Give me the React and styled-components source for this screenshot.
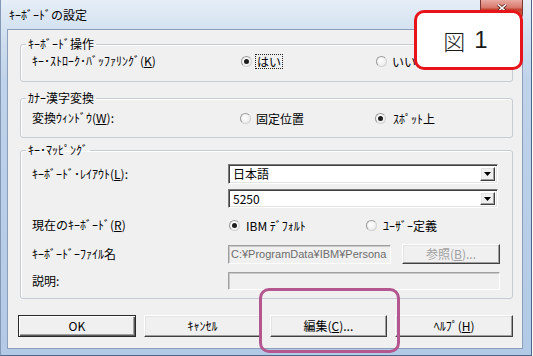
import React from 'react'
import styled, { createGlobalStyle, css } from 'styled-components'

const GlobalStyle = createGlobalStyle`
  html, body {
    margin: 0;
    padding: 0;
    background: #fff;
  }
  body {
    width: 533px;
    height: 356px;
    overflow: hidden;
    font-family: 'Noto Sans CJK JP', 'Liberation Sans', sans-serif;
    color: #000;
  }
`

const sunken = css`
  box-sizing: border-box;
  border: 1px solid;
  border-color: #7a7a7a #fff #fff #7a7a7a;
  box-shadow: inset 1px 1px 0 #404040, inset -1px -1px 0 #e3e3e3;
`

const raised = css`
  box-sizing: border-box;
  border: 1px solid;
  border-color: #fff #404040 #404040 #fff;
  box-shadow: inset -1px -1px 0 #a0a0a0, inset 1px 1px 0 #e3e3e3;
  background: #f0f0f0;
`

const Frame = styled.div`
  position: relative;
  box-sizing: border-box;
  width: 532px;
  height: 356px;
  display: flex;
  flex-direction: column;
  border-left: 1px solid #8399b5;
  border-right: 1px solid #4f6686;
  border-bottom: 1px solid #4f6686;
  background: linear-gradient(180deg, #e6eef7 0px, #d4e2f1 28px, #bfd3ea 80px, #b2cae6 100%);
`

const TitleBar = styled.div`
  height: 29px;
  display: flex;
  align-items: flex-start;
  justify-content: space-between;
`

const Title = styled.div`
  padding: 9px 0 0 8px;
  font-size: 12px;
  line-height: 12px;
`

const CloseButton = styled.div`
  box-sizing: border-box;
  width: 43px;
  height: 18px;
  margin-right: 8px;
  display: flex;
  justify-content: center;
  padding-top: 4px;
  border: 1px solid #7a3630;
  border-top: none;
  border-radius: 0 0 4px 4px;
  background: linear-gradient(180deg, #e9aaa2 0%, #d7776b 45%, #c2432f 55%, #d0634f 100%);
`

const Client = styled.div`
  box-sizing: border-box;
  height: 320px;
  margin: 0 8px 0 6px;
  padding: 0 9px 0 12px;
  border: 1px solid #8b9fba;
  background: #f0f0f0;
  display: flex;
  flex-direction: column;
`

const Group = styled.fieldset`
  margin: ${p => p.$mt}px 0 0;
  padding: 0;
  min-width: 0;
  border: 1px solid #c6ccd2;
  border-radius: 3px;
  box-shadow: inset 1px 1px 0 #fff;
`

const Legend = styled.legend`
  margin-left: 5px;
  padding: 0 2px;
  font-size: 12px;
  line-height: 12px;
`

const GroupBody = styled.div`
  display: flex;
  flex-direction: column;
  padding: ${p => p.$pt}px 12px ${p => p.$pb}px 11px;
`

const Row = styled.div`
  display: grid;
  grid-template-columns: ${p => p.$label}px 1fr;
  align-items: center;
  height: ${p => p.$h}px;
  margin-top: ${p => p.$mt || 0}px;
`

const Label = styled.span`
  font-size: 12px;
  line-height: 12px;
  white-space: nowrap;
`

const Key = styled.span`
  text-decoration: underline;
  text-underline-offset: 1px;
`

const Radios = styled.div`
  display: grid;
  grid-template-columns: ${p => p.$step}px auto;
  padding-left: ${p => p.$indent || 0}px;
`

const RadioItem = styled.div`
  display: flex;
  align-items: center;
  gap: ${p => p.$gap}px;
  font-size: 12px;
  line-height: 12px;
  white-space: nowrap;
`

const RadioDot = styled.span`
  box-sizing: border-box;
  width: 11px;
  height: 11px;
  border-radius: 50%;
  border: 1px solid #9a9a9a;
  border-right-color: #d2d2d2;
  border-bottom-color: #d2d2d2;
  background: radial-gradient(circle at 40% 40%, #fff 0%, #e6e6e6 100%);
  display: flex;
  align-items: center;
  justify-content: center;
  &::after {
    content: '';
    width: 5px;
    height: 5px;
    border-radius: 50%;
    background: ${p => (p.$checked ? '#1c1c1c' : 'transparent')};
  }
`

const RadioText = styled.span`
  padding: 1px 1px 0;
  outline: ${p => (p.$focus ? '1px dotted #222' : 'none')};
`

const Radio = ({ checked, focus, gap = 4, children }) => (
  <RadioItem $gap={gap}>
    <RadioDot $checked={checked} />
    <RadioText $focus={focus}>{children}</RadioText>
  </RadioItem>
)

const Select = styled.div`
  ${sunken};
  width: 270px;
  height: ${p => p.$h}px;
  background: #fff;
  display: flex;
  align-items: center;
  justify-content: space-between;
  padding: 2px 2px 2px 4px;
  font-size: 12px;
  line-height: 12px;
`

const ArrowButton = styled.span`
  ${raised};
  width: 15px;
  height: 100%;
  display: flex;
  align-items: center;
  justify-content: center;
`

const Field = styled.div`
  box-sizing: border-box;
  border: 1px solid;
  border-color: #a0a0a0 #fff #fff #a0a0a0;
  box-shadow: inset 1px 1px 0 #c9c9c9;
  background: #f0f0f0;
  height: ${p => p.$h}px;
  width: ${p => p.$w || 'auto'};
  padding: 0 2px;
  display: flex;
  align-items: center;
  overflow: hidden;
  white-space: nowrap;
  font-family: 'Liberation Sans', 'Noto Sans CJK JP', sans-serif;
  font-size: 11px;
  line-height: 12px;
  color: #6d6d6d;
`

const FileRow = styled.div`
  display: grid;
  grid-template-columns: 163px 98px;
  column-gap: 11px;
  align-items: center;
`

const Button = styled.button`
  ${raised};
  height: ${p => p.$h || 22}px;
  padding: 0;
  font-family: inherit;
  font-size: 12px;
  line-height: 12px;
  color: ${p => (p.disabled ? '#a0a0a0' : '#000')};
  ${p =>
    p.$default &&
    css`
      border-color: #2a2a2a;
      box-shadow: inset 1px 1px 0 #fff, inset -1px -1px 0 #5a5a5a, inset -2px -2px 0 #a0a0a0;
    `}
`

const ButtonRow = styled.div`
  display: grid;
  grid-template-columns: repeat(4, 1fr);
  column-gap: 8px;
  margin: 16px 0 0 -2px;
`

const Callout = styled.div`
  position: absolute;
  left: 413px;
  top: 10px;
  box-sizing: border-box;
  width: 109px;
  height: 60px;
  border: 3px solid #e8141b;
  border-radius: 10px;
  background: #fff;
  display: flex;
  align-items: center;
  justify-content: center;
  gap: 9px;
  padding-right: 6px;
  font-size: 22px;
  line-height: 22px;
  color: #1a1a1a;
`

const CalloutMark = styled.span`
  font-family: 'Noto Sans CJK JP', sans-serif;
  font-weight: 300;
`

const CalloutNum = styled.span`
  font-family: 'Liberation Sans', sans-serif;
  font-size: 24px;
`

const Highlight = styled.div`
  position: absolute;
  left: 258px;
  top: 288px;
  box-sizing: border-box;
  width: 141px;
  height: 65px;
  border: 3px solid #b4578f;
  border-radius: 10px;
`

const Arrow = () => (
  <svg width="7" height="4" viewBox="0 0 7 4">
    <path d="M0 0h7L3.5 4z" fill="#000" />
  </svg>
)

export default function App() {
  return (
    <>
      <GlobalStyle />
      <Frame>
        <TitleBar>
          <Title>ｷｰﾎﾞｰﾄﾞの設定</Title>
          <CloseButton>
            <svg width="10" height="8" viewBox="0 0 10 8">
              <path d="M1 0.5L9 7.5M9 0.5L1 7.5" stroke="#5a1f1a" strokeWidth="3" />
              <path d="M1 0.5L9 7.5M9 0.5L1 7.5" stroke="#fff" strokeWidth="1.6" />
            </svg>
          </CloseButton>
        </TitleBar>
        <Client>
          <Group $mt={8}>
            <Legend>ｷｰﾎﾞｰﾄﾞ操作</Legend>
            <GroupBody $pt={3} $pb={12}>
              <Row $label={209} $h={16}>
                <Label>
                  ｷｰ･ｽﾄﾛｰｸ･ﾊﾞｯﾌｧﾘﾝｸﾞ(<Key>K</Key>)
                </Label>
                <Radios $step={135}>
                  <Radio checked focus>はい</Radio>
                  <Radio>いいえ</Radio>
                </Radios>
              </Row>
            </GroupBody>
          </Group>

          <Group $mt={10}>
            <Legend>ｶﾅｰ漢字変換</Legend>
            <GroupBody $pt={6} $pb={11}>
              <Row $label={208} $h={16}>
                <Label>
                  変換ｳｨﾝﾄﾞｳ(<Key>W</Key>):
                </Label>
                <Radios $step={135}>
                  <Radio>固定位置</Radio>
                  <Radio checked gap={6}>ｽﾎﾟｯﾄ上</Radio>
                </Radios>
              </Row>
            </GroupBody>
          </Group>

          <Group $mt={6}>
            <Legend>ｷｰ･ﾏｯﾋﾟﾝｸﾞ</Legend>
            <GroupBody $pt={0} $pb={8}>
              <Row $label={196} $h={20} $mt={8}>
                <Label>
                  ｷｰﾎﾞｰﾄﾞ･ﾚｲｱｳﾄ(<Key>L</Key>):
                </Label>
                <Select $h={20}>
                  日本語
                  <ArrowButton>
                    <Arrow />
                  </ArrowButton>
                </Select>
              </Row>
              <Row $label={196} $h={19} $mt={5}>
                <span />
                <Select $h={19}>
                  5250
                  <ArrowButton>
                    <Arrow />
                  </ArrowButton>
                </Select>
              </Row>
              <Row $label={196} $h={16} $mt={9}>
                <Label>
                  現在のｷｰﾎﾞｰﾄﾞ(<Key>R</Key>)
                </Label>
                <Radios $step={137} $indent={1}>
                  <Radio checked gap={5}>IBM ﾃﾞﾌｫﾙﾄ</Radio>
                  <Radio gap={5}>ﾕｰｻﾞｰ定義</Radio>
                </Radios>
              </Row>
              <Row $label={196} $h={20} $mt={11}>
                <Label>ｷｰﾎﾞｰﾄﾞｰﾌｧｲﾙ名</Label>
                <FileRow>
                  <Field $h={19}>C:¥ProgramData¥IBM¥Persona</Field>
                  <Button $h={20} disabled>
                    参照(<Key>B</Key>)...
                  </Button>
                </FileRow>
              </Row>
              <Row $label={196} $h={18} $mt={8}>
                <Label>説明:</Label>
                <Field $h={18} $w="272px" />
              </Row>
            </GroupBody>
          </Group>

          <ButtonRow>
            <Button $default>OK</Button>
            <Button>ｷｬﾝｾﾙ</Button>
            <Button>
              編集(<Key>C</Key>)...
            </Button>
            <Button>
              ﾍﾙﾌﾟ(<Key>H</Key>)
            </Button>
          </ButtonRow>
        </Client>
        <Callout>
          <CalloutMark>図</CalloutMark>
          <CalloutNum>1</CalloutNum>
        </Callout>
        <Highlight />
      </Frame>
    </>
  )
}
